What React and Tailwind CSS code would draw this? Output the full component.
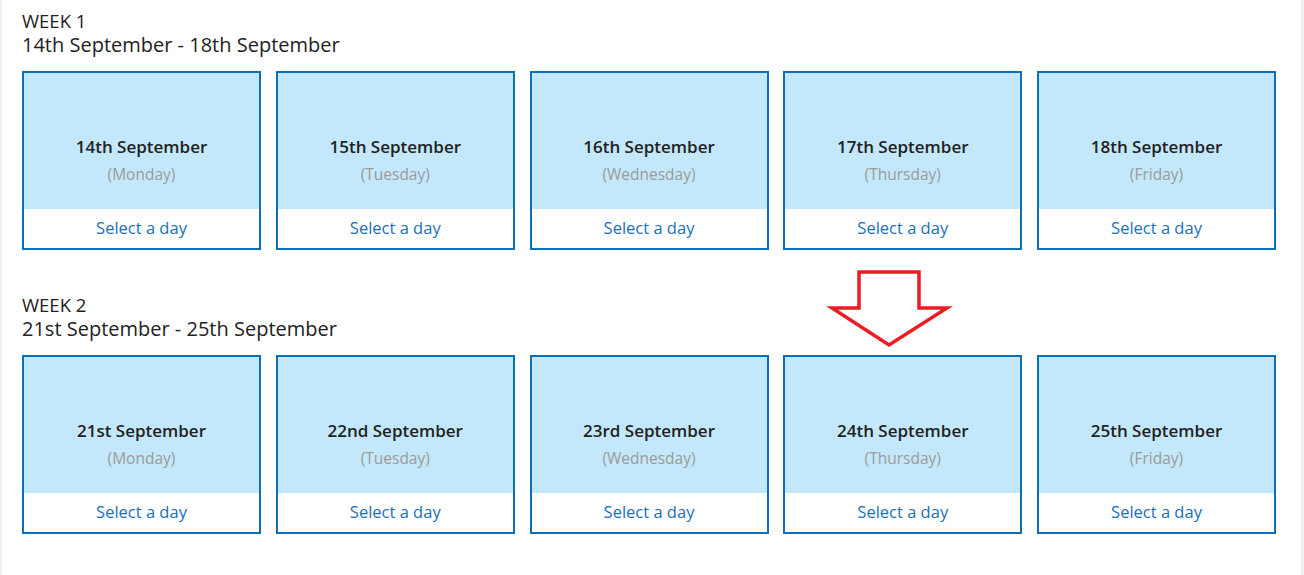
const weeks = [
  {
    title: 'WEEK 1',
    range: '14th September - 18th September',
    days: [
      ['14th September', 'Monday'],
      ['15th September', 'Tuesday'],
      ['16th September', 'Wednesday'],
      ['17th September', 'Thursday'],
      ['18th September', 'Friday'],
    ],
  },
  {
    title: 'WEEK 2',
    range: '21st September - 25th September',
    days: [
      ['21st September', 'Monday'],
      ['22nd September', 'Tuesday'],
      ['23rd September', 'Wednesday'],
      ['24th September', 'Thursday'],
      ['25th September', 'Friday'],
    ],
  },
]

function DayCard({ date, day }) {
  return (
    <div className="w-[239px] h-[179px] border-2 border-[#0b6fb9] flex flex-col">
      <div className="h-[136px] bg-[#c3e8fb] pt-[62px] text-center">
        <div className="text-[17px] leading-[24px] font-semibold text-[#222]">{date}</div>
        <div className="text-[15.5px] leading-[30px] text-[#9b9b9b]">({day})</div>
      </div>
      <div className="flex-1 flex items-center justify-center bg-white text-[16.5px] text-[#1b6fb7]">
        Select a day
      </div>
    </div>
  )
}

export default function App() {
  return (
    <div className="relative w-[1304px] h-[575px] bg-white border-l-2 border-r-[3px] border-[#efefef] pl-[20px] pt-[9px] font-['Open_Sans',sans-serif]">
      <div className="flex flex-col gap-[43px]">
        {weeks.map((w) => (
          <section key={w.title}>
            <div className="text-[18.5px] leading-[24px] text-[#222]">{w.title}</div>
            <div className="text-[20px] leading-[24px] text-[#222]">{w.range}</div>
            <div className="mt-[14px] w-[1254px] flex justify-between">
              {w.days.map(([date, day]) => (
                <DayCard key={date} date={date} day={day} />
              ))}
            </div>
          </section>
        ))}
      </div>
      <svg className="absolute left-[824px] top-[268px]" width="128" height="82" viewBox="824 268 128 82">
        <polygon
          points="857,272 917,272 917,308 945,308 887,345 830,308 857,308"
          fill="none"
          stroke="#ed1c24"
          strokeWidth="3.5"
          strokeLinejoin="miter"
        />
      </svg>
    </div>
  )
}
